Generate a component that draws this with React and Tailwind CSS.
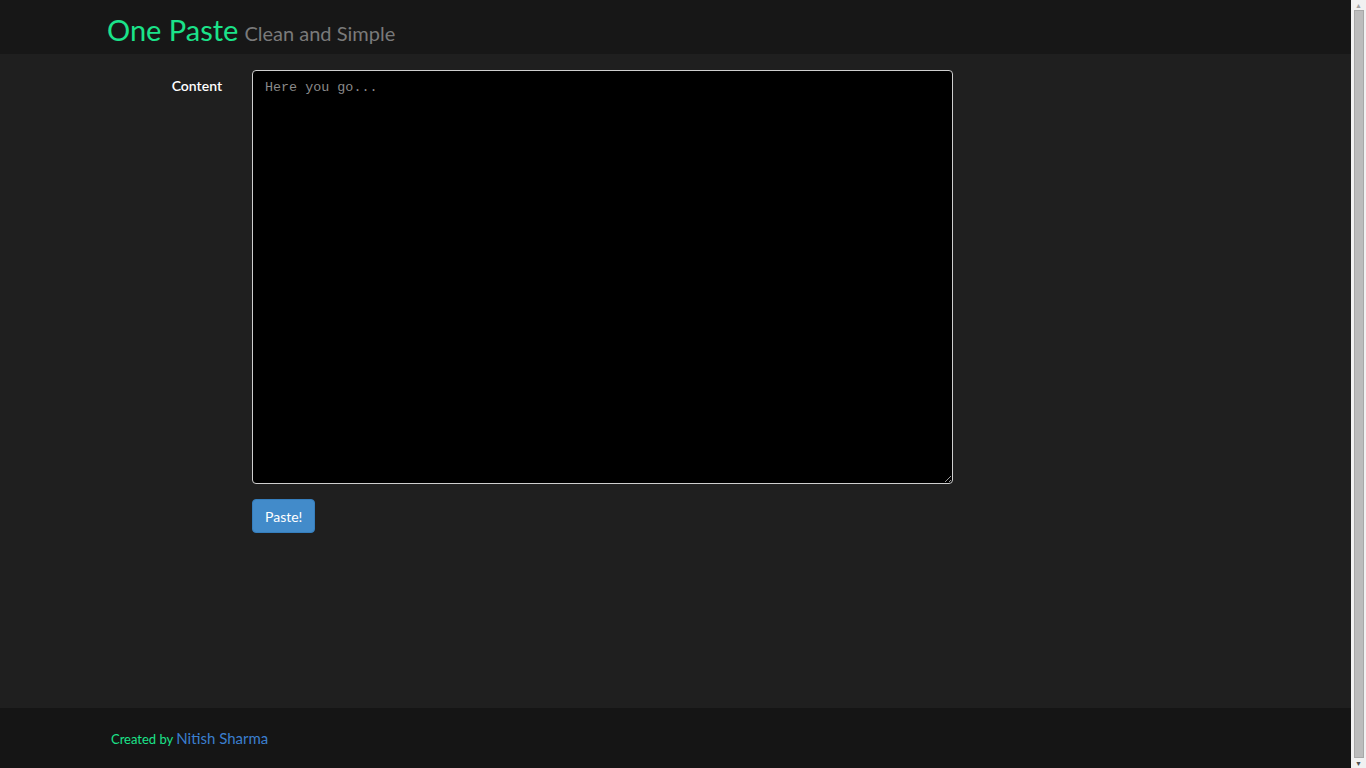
import { useState } from 'react';

const App = () => {
    const [content, setContent] = useState('');

    return (
        <div className="min-h-[768px] flex flex-col bg-[#1f1f1f] font-['Lato','Open_Sans',sans-serif] pr-[15px]">
            {/* Header */}
            <header className="h-[54px] bg-[#171717]">
                <div className="ml-[107px] flex items-baseline pt-[10px]">
                    <span className="text-[29px] leading-[40px] text-[#1be38a]">One Paste</span>
                    <span className="ml-[6px] text-[20px] text-[#7a7a7a]">Clean and Simple</span>
                </div>
            </header>

            {/* Form */}
            <main className="flex-1 pt-[16px]">
                <div className="flex">
                    <label className="w-[222px] text-right pt-[5px] text-[14px] font-semibold text-white">
                        Content
                    </label>
                    <div className="ml-[30px]">
                        <textarea
                            value={content}
                            onChange={(e) => setContent(e.target.value)}
                            placeholder="Here you go..."
                            className="block w-[701px] h-[414px] bg-black border border-[#cfcfcf] rounded-[4px] px-[12px] py-[7px] font-['Liberation_Mono',monospace] text-[13.4px] text-white placeholder:text-[#8a8a8a] outline-none"
                        />
                        <button className="mt-[15px] h-[34px] px-[12px] bg-[#428bca] text-white text-[14px] rounded-[4px] border border-[#357ebd]">
                            Paste!
                        </button>
                    </div>
                </div>
            </main>

            {/* Footer */}
            <footer className="h-[60px] bg-[#151515] mt-[175px]">
                <div className="ml-[111px] pt-[19px] text-[13px]">
                    <span className="text-[#1be38a]">Created by </span>
                    <a className="text-[15px] text-[#3b7fcf]">Nitish Sharma</a>
                </div>
            </footer>

            {/* Scrollbar look-alike */}
            <div className="fixed top-0 right-0 w-[15px] h-[768px] bg-[#f1f1f1] flex flex-col items-center">
                <div className="h-[10px] flex items-center justify-center text-[7px] leading-none text-[#a3a3a3]">▲</div>
                <div className="flex-1 w-[10px] bg-[#bcbcbc] border border-[#a8a8a8]" />
                <div className="h-[10px] flex items-center justify-center text-[7px] leading-none text-[#505050]">▼</div>
            </div>
        </div>
    );
};

export default App;
